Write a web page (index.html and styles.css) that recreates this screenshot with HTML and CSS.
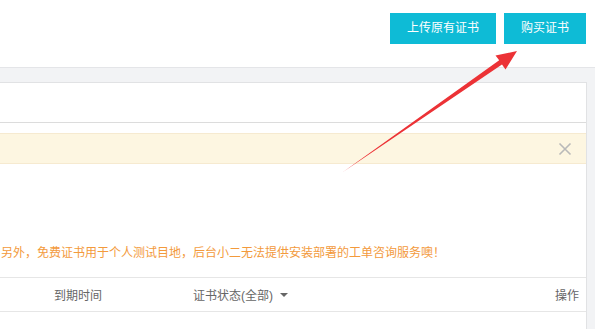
FILE: index.html
```html
<!DOCTYPE html>
<html>
  <head>
    <title>证书服务</title>
    <meta charset="UTF-8">
    <link rel="stylesheet" href="styles.css">
  </head>
  <body>

<!-- top bar -->
<div class="topBar">
<span class="btn btnWide">上传原有证书</span>
<span class="btn btnBuy">购买证书</span>
</div>

<!-- content -->
<div class="grayArea">
<div class="panel">
<div class="panelHead"></div>
<div class="panelBody">
<div class="alert">
<svg class="closeX" width="14" height="14" viewBox="0 0 14 14"><path d="M1.5 1.5 L12.5 12.5 M12.5 1.5 L1.5 12.5" stroke="#b9b9b9" stroke-width="1.6" fill="none"/></svg>
</div>
<p class="note">另外，免费证书用于个人测试目地，后台小二无法提供安装部署的工单咨询服务噢！</p>
<div class="tableHead">
<span class="col colFirst"></span>
<span class="col colDate">到期时间</span>
<span class="col colState">证书状态(全部)<i class="caret"></i></span>
<span class="col colOp">操作</span>
</div>
</div>
</div>
</div>

<!-- annotation arrow -->
<svg class="arrow" width="595" height="329" viewBox="0 0 595 329">
<polygon points="343,172 502,64.5 505.5,69.5 517,51 495.5,55.5 499.2,60.3" fill="#ec3236"/>
</svg>

  </body>
</html>
```

FILE: styles.css
```css
body{
margin: 0;
width: 595px;
height: 329px;
overflow: hidden;
position: relative;
font-family: "Liberation Sans", "Noto Sans CJK SC", sans-serif;
font-size: 12px;
background-color: #f2f3f5;
}

.topBar{
height: 67px;
box-sizing: border-box;
padding: 13px 9px 0 0;
background-color: white;
display: flex;
justify-content: flex-end;
gap: 8px;
}

.btn{
height: 31px;
line-height: 31px;
text-align: center;
color: white;
background-color: #0ebbd6;
}

.btnWide{
width: 106px;
}

.btnBuy{
width: 82px;
}

.grayArea{
border-top: 1px solid #e4e5e8;
padding-top: 14px;
}

.panel{
margin: 0 8px 0 -20px;
background-color: white;
border: 1px solid #e1e2e4;
border-bottom: none;
height: 246px;
}

.panelHead{
height: 39px;
border-bottom: 1px solid #dcdcdc;
}

.panelBody{
padding-top: 10px;
}

.alert{
height: 29px;
background-color: #fdf6e1;
border: 1px solid #f6ead0;
border-right: none;
display: flex;
justify-content: flex-end;
align-items: center;
padding-right: 14px;
}

.note{
margin: 79px 0 0 0;
padding-left: 20px;
line-height: 20px;
color: #f39a3c;
}

.tableHead{
margin-top: 14px;
height: 33px;
border-top: 1px solid #e6e6e6;
border-bottom: 1px solid #e6e6e6;
display: flex;
align-items: center;
padding: 0 7px 0 20px;
color: #666;
}

.colFirst{
width: 53px;
}

.colDate{
width: 139px;
}

.colState{
flex-grow: 1;
display: flex;
align-items: center;
}

.caret{
display: inline-block;
margin-left: 7px;
border-left: 4px solid transparent;
border-right: 4px solid transparent;
border-top: 4px solid #666;
}

.arrow{
position: absolute;
top: 0;
left: 0;
pointer-events: none;
}
```
